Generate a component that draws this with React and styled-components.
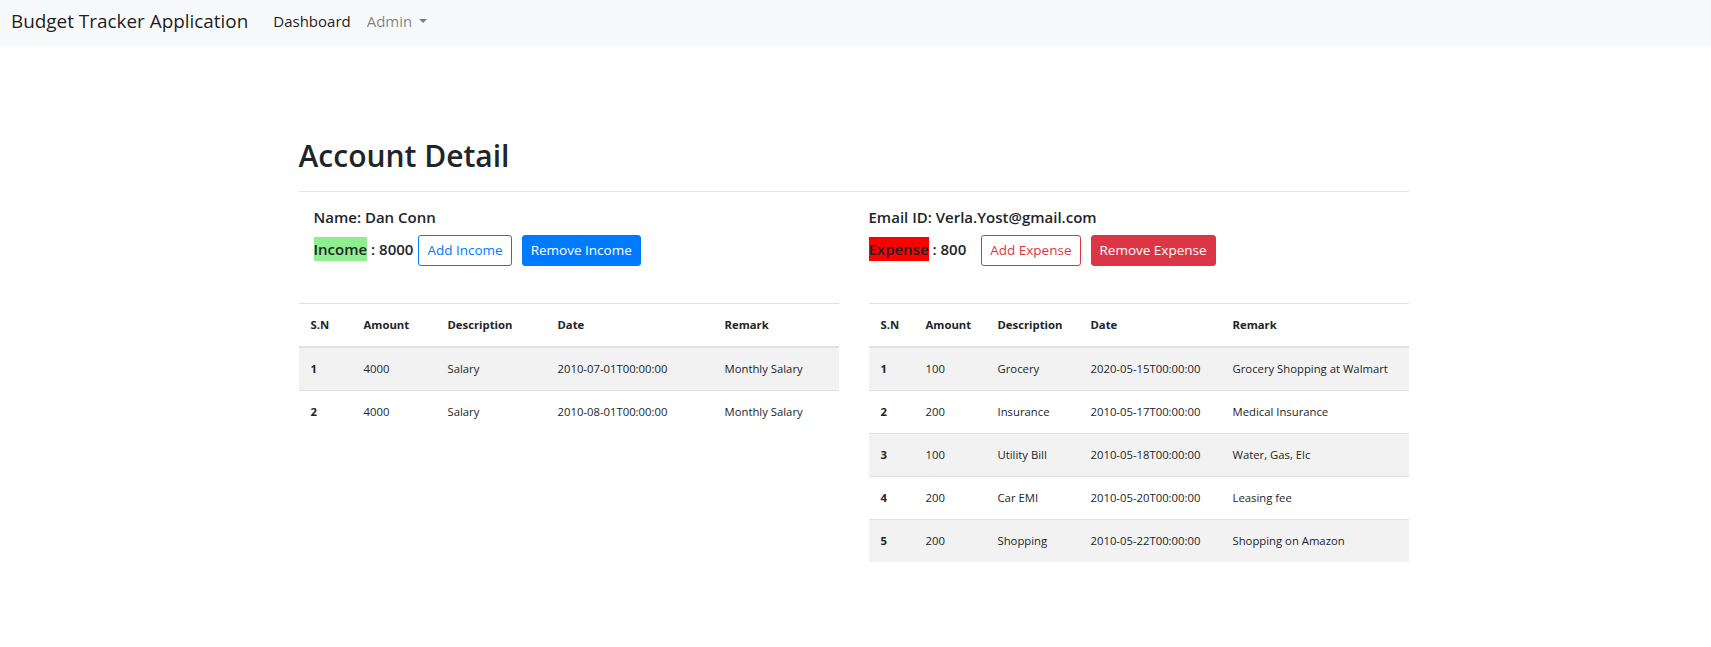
import React from "react";
import styled, { createGlobalStyle } from "styled-components";

const colors = {
  text: "#212529",
  border: "#dee2e6",
  stripe: "#f2f2f2",
  navbar: "#f8f9fa",
  primary: "#007bff",
  danger: "#dc3545"
};

const GlobalStyle = createGlobalStyle`
  body {
    margin: 0;
    background: #fff;
    color: ${colors.text};
    font-family: "Open Sans", sans-serif;
  }
`;

const Navbar = styled.nav`
  display: flex;
  align-items: center;
  box-sizing: border-box;
  height: 46px;
  padding: 0 16px 4px 11px;
  background: ${colors.navbar};
`;

const Brand = styled.span`
  margin-right: 25px;
  font-size: 18.9px;
  line-height: 30px;
  color: rgba(0, 0, 0, 0.9);
`;

const NavLink = styled.span`
  margin-right: 16px;
  font-size: 15px;
  line-height: 24px;
  color: ${p => (p.muted ? "rgba(0, 0, 0, 0.5)" : "rgba(0, 0, 0, 0.9)")};

  &::after {
    content: ${p => (p.dropdown ? "''" : "none")};
    display: inline-block;
    margin-left: 0.45em;
    vertical-align: 0.255em;
    border-top: 0.32em solid;
    border-right: 0.32em solid transparent;
    border-left: 0.32em solid transparent;
  }
`;

const Main = styled.main`
  box-sizing: border-box;
  width: 1110px;
  margin: 0 auto;
  padding-top: 92px;
  position: relative;
  left: -2px;
`;

const Title = styled.h1`
  margin: 0 0 17px;
  font-size: 30px;
  font-weight: 600;
  line-height: 36px;
`;

const Rule = styled.hr`
  margin: 0;
  border: 0;
  border-top: 1px solid rgba(0, 0, 0, 0.1);
`;

const Columns = styled.div`
  display: grid;
  grid-template-columns: 540px 540px;
  column-gap: 30px;
`;

const Info = styled.div`
  padding-left: ${p => p.inset}px;
  padding-top: 13px;
  margin-bottom: 37px;
`;

const InfoLine = styled.div`
  font-size: 15px;
  font-weight: 600;
  line-height: 24px;
`;

const AmountRow = styled.div`
  display: flex;
  align-items: baseline;
  margin-top: 6px;
  font-size: 15px;
  font-weight: 600;
  line-height: 24px;
`;

const Highlight = styled.span`
  background: ${p => p.color};
`;

const Amount = styled.span`
  margin-right: ${p => p.gap}px;
  white-space: pre;
`;

const Button = styled.button`
  box-sizing: border-box;
  margin-right: 10px;
  padding: 4px 8px;
  border: 1px solid ${p => p.color};
  border-radius: 3px;
  background: ${p => (p.solid ? p.color : "#fff")};
  color: ${p => (p.solid ? "#fff" : p.color)};
  font-family: "Open Sans", sans-serif;
  font-size: 13.5px;
  font-weight: 400;
  line-height: 21px;
  cursor: pointer;
`;

const Table = styled.table`
  width: 100%;
  border-collapse: collapse;
  font-size: 11.3px;
  line-height: 18px;
  color: ${colors.text};

  th,
  td {
    padding: 12px;
    text-align: left;
    vertical-align: top;
    border-top: 1px solid ${colors.border};
  }

  th {
    font-weight: 700;
    border-bottom: 2px solid ${colors.border};
  }

  td:first-child {
    font-weight: 700;
  }

  tbody tr:nth-of-type(odd) {
    background: ${colors.stripe};
  }
`;

const Col = styled.col`
  width: ${p => p.w}px;
`;

const headers = ["S.N", "Amount", "Description", "Date", "Remark"];

const incomes = [
  ["4000", "Salary", "2010-07-01T00:00:00", "Monthly Salary"],
  ["4000", "Salary", "2010-08-01T00:00:00", "Monthly Salary"]
];

const expenses = [
  ["100", "Grocery", "2020-05-15T00:00:00", "Grocery Shopping at Walmart"],
  ["200", "Insurance", "2010-05-17T00:00:00", "Medical Insurance"],
  ["100", "Utility Bill", "2010-05-18T00:00:00", "Water, Gas, Elc"],
  ["200", "Car EMI", "2010-05-20T00:00:00", "Leasing fee"],
  ["200", "Shopping", "2010-05-22T00:00:00", "Shopping on Amazon"]
];

const Ledger = ({ widths, rows }) => (
  <Table>
    <colgroup>
      {widths.map((w, i) => (
        <Col key={i} w={w} />
      ))}
    </colgroup>
    <thead>
      <tr>
        {headers.map(h => (
          <th key={h}>{h}</th>
        ))}
      </tr>
    </thead>
    <tbody>
      {rows.map((row, i) => (
        <tr key={i}>
          <td>{i + 1}</td>
          {row.map((cell, j) => (
            <td key={j}>{cell}</td>
          ))}
        </tr>
      ))}
    </tbody>
  </Table>
);

const App = () => (
  <>
    <GlobalStyle />
    <Navbar>
      <Brand>Budget Tracker Application</Brand>
      <NavLink>Dashboard</NavLink>
      <NavLink muted dropdown>
        Admin
      </NavLink>
    </Navbar>

    <Main>
      <Title>Account Detail</Title>
      <Rule />
      <Columns>
        <div>
          <Info inset={15}>
            <InfoLine>Name: Dan Conn</InfoLine>
            <AmountRow>
              <Highlight color="#90ee90">Income</Highlight>
              <Amount gap={5}> : 8000</Amount>
              <Button color={colors.primary}>Add Income</Button>
              <Button solid color={colors.primary}>
                Remove Income
              </Button>
            </AmountRow>
          </Info>
          <Ledger widths={[53, 84, 110, 167, 126]} rows={incomes} />
        </div>

        <div>
          <Info inset={0}>
            <InfoLine>Email ID: Verla.Yost@gmail.com</InfoLine>
            <AmountRow>
              <Highlight color="#ff0000">Expense</Highlight>
              <Amount gap={15}> : 800</Amount>
              <Button color={colors.danger}>Add Expense</Button>
              <Button solid color={colors.danger}>
                Remove Expense
              </Button>
            </AmountRow>
          </Info>
          <Ledger widths={[45, 72, 93, 142, 188]} rows={expenses} />
        </div>
      </Columns>
    </Main>
  </>
);

export default App;
